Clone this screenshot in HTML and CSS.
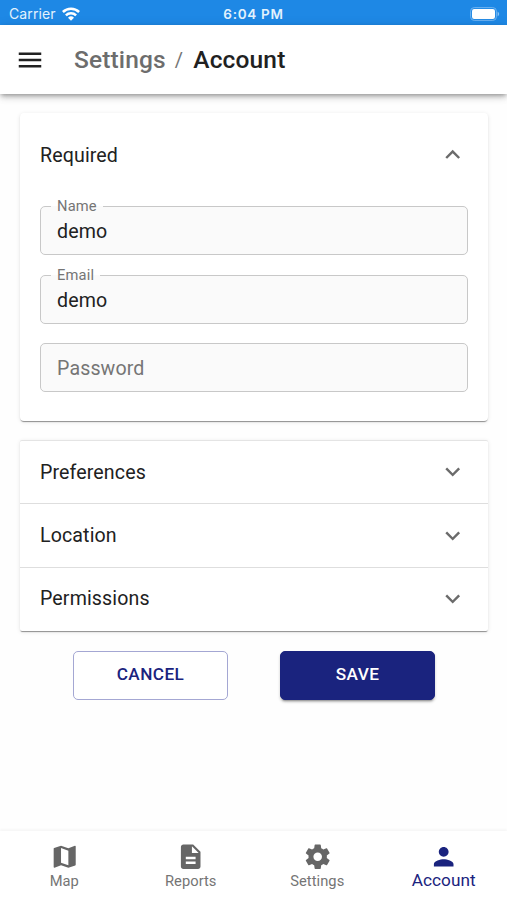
FILE: index.html
```html
<!DOCTYPE html>
<html lang="en">
<head>
<meta charset="utf-8">
<title>Settings / Account</title>
<link rel="stylesheet" href="styles.css">
</head>
<body>
<div class="status">
  <div class="carrier"><span>Carrier</span>
    <svg class="wifi" viewBox="0 0 18 14"><g fill="none" stroke="#fff" stroke-width="2.5"><path d="M.9 5a11.5 11.5 0 0 1 16.2 0"/><path d="M3.9 8.3a7.3 7.3 0 0 1 10.2 0"/></g><path fill="#fff" d="M9 13.7l-3-3a4.3 4.3 0 0 1 6 0z"/></svg>
  </div>
  <div class="time">6:04 PM</div>
  <svg class="battery" viewBox="0 0 30 14"><rect x=".6" y=".6" width="25.8" height="12.8" rx="3.6" fill="none" stroke="#6fb3f0" stroke-width="1"/><rect x="2" y="2" width="23" height="10" rx="2.2" fill="#fff"/><path d="M27.6 4.6q3.2 2.4 0 4.8z" fill="#8cc3f5"/></svg>
</div>
<header class="appbar">
  <svg class="menu" viewBox="0 0 24 24"><path d="M3 18h18v-2H3v2zm0-5h18v-2H3v2zm0-7v2h18V6H3z"/></svg>
  <h1 class="crumbs"><span class="parent">Settings</span><span class="slash">/</span><span>Account</span></h1>
</header>
<main class="content">
  <section class="card required">
    <div class="row"><span>Required</span><svg class="chevron" viewBox="0 0 24 24"><path d="M12 8l-6 6 1.41 1.41L12 10.83l4.59 4.58L18 14z"/></svg></div>
    <div class="fields">
      <fieldset class="field"><legend>Name</legend><div class="value">demo</div></fieldset>
      <fieldset class="field"><legend>Email</legend><div class="value">demo</div></fieldset>
      <div class="field plain"><div class="value placeholder">Password</div></div>
    </div>
  </section>
  <section class="card list">
    <div class="row"><span>Preferences</span><svg class="chevron" viewBox="0 0 24 24"><path d="M16.59 8.59L12 13.17 7.41 8.59 6 10l6 6 6-6z"/></svg></div>
    <div class="row"><span>Location</span><svg class="chevron" viewBox="0 0 24 24"><path d="M16.59 8.59L12 13.17 7.41 8.59 6 10l6 6 6-6z"/></svg></div>
    <div class="row"><span>Permissions</span><svg class="chevron" viewBox="0 0 24 24"><path d="M16.59 8.59L12 13.17 7.41 8.59 6 10l6 6 6-6z"/></svg></div>
  </section>
  <div class="actions">
    <button class="btn outlined">CANCEL</button>
    <button class="btn filled">SAVE</button>
  </div>
</main>
<nav class="tabs">
  <div class="tab"><svg viewBox="0 0 24 24"><path d="M20.5 3l-.16.03L15 5.1 9 3 3.36 4.9c-.21.07-.36.25-.36.48V20.5c0 .28.22.5.5.5l.16-.03L9 18.9l6 2.1 5.64-1.9c.21-.07.36-.25.36-.48V3.5c0-.28-.22-.5-.5-.5zM15 19l-6-2.11V5l6 2.11V19z"/></svg><span>Map</span></div>
  <div class="tab"><svg viewBox="0 0 24 24"><path d="M14 2H6c-1.1 0-1.99.9-1.99 2L4 20c0 1.1.89 2 1.99 2H18c1.1 0 2-.9 2-2V8l-6-6zm2 16H8v-2h8v2zm0-4H8v-2h8v2zm-3-5V3.5L18.5 9H13z"/></svg><span>Reports</span></div>
  <div class="tab"><svg viewBox="0 0 24 24"><path d="M19.43 12.98c.04-.32.07-.64.07-.98s-.03-.66-.07-.98l2.11-1.65c.19-.15.24-.42.12-.64l-2-3.46c-.12-.22-.39-.3-.61-.22l-2.49 1c-.52-.4-1.08-.73-1.69-.98l-.38-2.65C14.46 2.18 14.25 2 14 2h-4c-.25 0-.46.18-.49.42l-.38 2.65c-.61.25-1.17.59-1.69.98l-2.49-1c-.23-.09-.49 0-.61.22l-2 3.46c-.13.22-.07.49.12.64l2.11 1.65c-.04.32-.07.65-.07.98s.03.66.07.98l-2.11 1.65c-.19.15-.24.42-.12.64l2 3.46c.12.22.39.3.61.22l2.49-1c.52.4 1.08.73 1.69.98l.38 2.65c.03.24.24.42.49.42h4c.25 0 .46-.18.49-.42l.38-2.65c.61-.25 1.17-.59 1.69-.98l2.49 1c.23.09.49 0 .61-.22l2-3.46c.12-.22.07-.49-.12-.64l-2.11-1.65zM12 15.5c-1.93 0-3.5-1.57-3.5-3.5s1.57-3.5 3.5-3.5 3.5 1.57 3.5 3.5-1.57 3.5-3.5 3.5z"/></svg><span>Settings</span></div>
  <div class="tab active"><svg viewBox="0 0 24 24"><path d="M12 12c2.21 0 4-1.79 4-4s-1.79-4-4-4-4 1.79-4 4 1.79 4 4 4zm0 2c-2.67 0-8 1.34-8 4v2h16v-2c0-2.66-5.33-4-8-4z"/></svg><span>Account</span></div>
</nav>
</body>
</html>
```
FILE: styles.css
```css
* { box-sizing: border-box; }
body {
  margin: 0;
  height: 900px;
  display: flex;
  flex-direction: column;
  overflow: hidden;
  background: #fefefe;
  color: #212121;
  font-family: Roboto, "Liberation Sans", sans-serif;
}
svg { display: block; fill: currentColor; flex: none; }

.status {
  height: 25px;
  flex: none;
  display: grid;
  grid-template-columns: 1fr auto 1fr;
  align-items: center;
  padding: 2px 7px 0 9px;
  background: #1e88e5;
  color: #e3f2fd;
  font-family: Inter, sans-serif;
  font-size: 14px;
}
.carrier { display: flex; align-items: center; gap: 6px; }
.carrier span { letter-spacing: .1px; }
.wifi { width: 18px; height: 14px; }
.time { margin-right: 2px; font-weight: 600; font-size: 13.5px; letter-spacing: .7px; }
.battery { width: 30px; height: 14px; justify-self: end; }

.appbar {
  height: 69px;
  flex: none;
  display: flex;
  align-items: center;
  padding: 0 15px;
  background: #fff;
  box-shadow: 0 2px 5px -1px rgba(0,0,0,.4), 0 5px 6px rgba(0,0,0,.08), 0 1px 12px rgba(0,0,0,.08);
}
.menu { width: 30px; height: 30px; }
.crumbs {
  margin: 0 0 0 29px;
  display: flex;
  font-size: 24.5px;
  line-height: 30px;
  font-weight: 500;
  letter-spacing: .15px;
}
.parent { color: #6d6d6d; }
.slash { margin: 0 10px 0 9px; font-size: 20px; font-weight: 400; color: #757575; }

.content { flex: 1; padding: 19px 19px 0 20px; }
.card {
  background: #fff;
  border-radius: 4px;
  box-shadow: 0 2px 1px -1px rgba(0,0,0,.3), 0 1px 1px rgba(0,0,0,.14), 0 1px 4px rgba(0,0,0,.1);
}
.required { height: 308px; }
.list { margin-top: 19px; height: 191px; border-top: 1px solid #e4e4e4; border-radius: 2px; }
.row {
  height: 63.5px;
  display: flex;
  align-items: center;
  justify-content: space-between;
  padding: 0 20.5px 0 20px;
  font-size: 19.6px;
  letter-spacing: .12px;
}
.required .row { height: 84px; }
.list .row:first-child { height: 62px; }
.list .row + .row { border-top: 1px solid #dedede; }
.chevron { width: 29.4px; height: 29.4px; color: #6b6b6b; }

.fields { padding: 0 20px; }
.field {
  height: 58px;
  min-width: 0;
  margin: 0 0 10.5px;
  padding: 0 16px;
  border: 1px solid #c8c8c8;
  border-radius: 5px;
  background: #fafafa;
}
.field legend {
  margin-left: -6px;
  padding: 0 6px;
  height: 19px;
  line-height: 19px;
  font-size: 14.7px;
  letter-spacing: .15px;
  color: #757575;
}
.value { line-height: 31px; font-size: 19.6px; letter-spacing: .12px; }
.plain { height: 49px; margin-top: 19px; }
.plain .value { line-height: 49px; }
.placeholder { color: #757575; }

.actions { display: flex; justify-content: center; gap: 52px; margin-top: 20px; }
.btn {
  width: 155px;
  height: 49px;
  padding: 0 0 3px;
  border: 1px solid #a4a7d3;
  border-radius: 5px;
  background: #fff;
  color: #1a237e;
  font: 500 17.2px Roboto, sans-serif;
  letter-spacing: .45px;
}
.filled {
  border-color: #1a237e;
  background: #1a237e;
  color: #fff;
  box-shadow: 0 3px 2px -2px rgba(0,0,0,.3), 0 2px 3px rgba(0,0,0,.2);
}

.tabs {
  height: 69px;
  flex: none;
  display: flex;
  padding-left: 1px;
  background: #fff;
  color: #666;
  box-shadow: 0 -2px 2px rgba(0,0,0,.03);
}
.tab { flex: 1; display: flex; flex-direction: column; align-items: center; padding-top: 11px; }
.tab svg { width: 29.4px; height: 29.4px; }
.tab span { font-size: 14.7px; line-height: 21px; letter-spacing: .05px; color: #757575; }
.tab.active { color: #1a237e; }
.tab.active span { font-size: 17.2px; line-height: 19px; letter-spacing: .05px; color: #1a237e; }
```
